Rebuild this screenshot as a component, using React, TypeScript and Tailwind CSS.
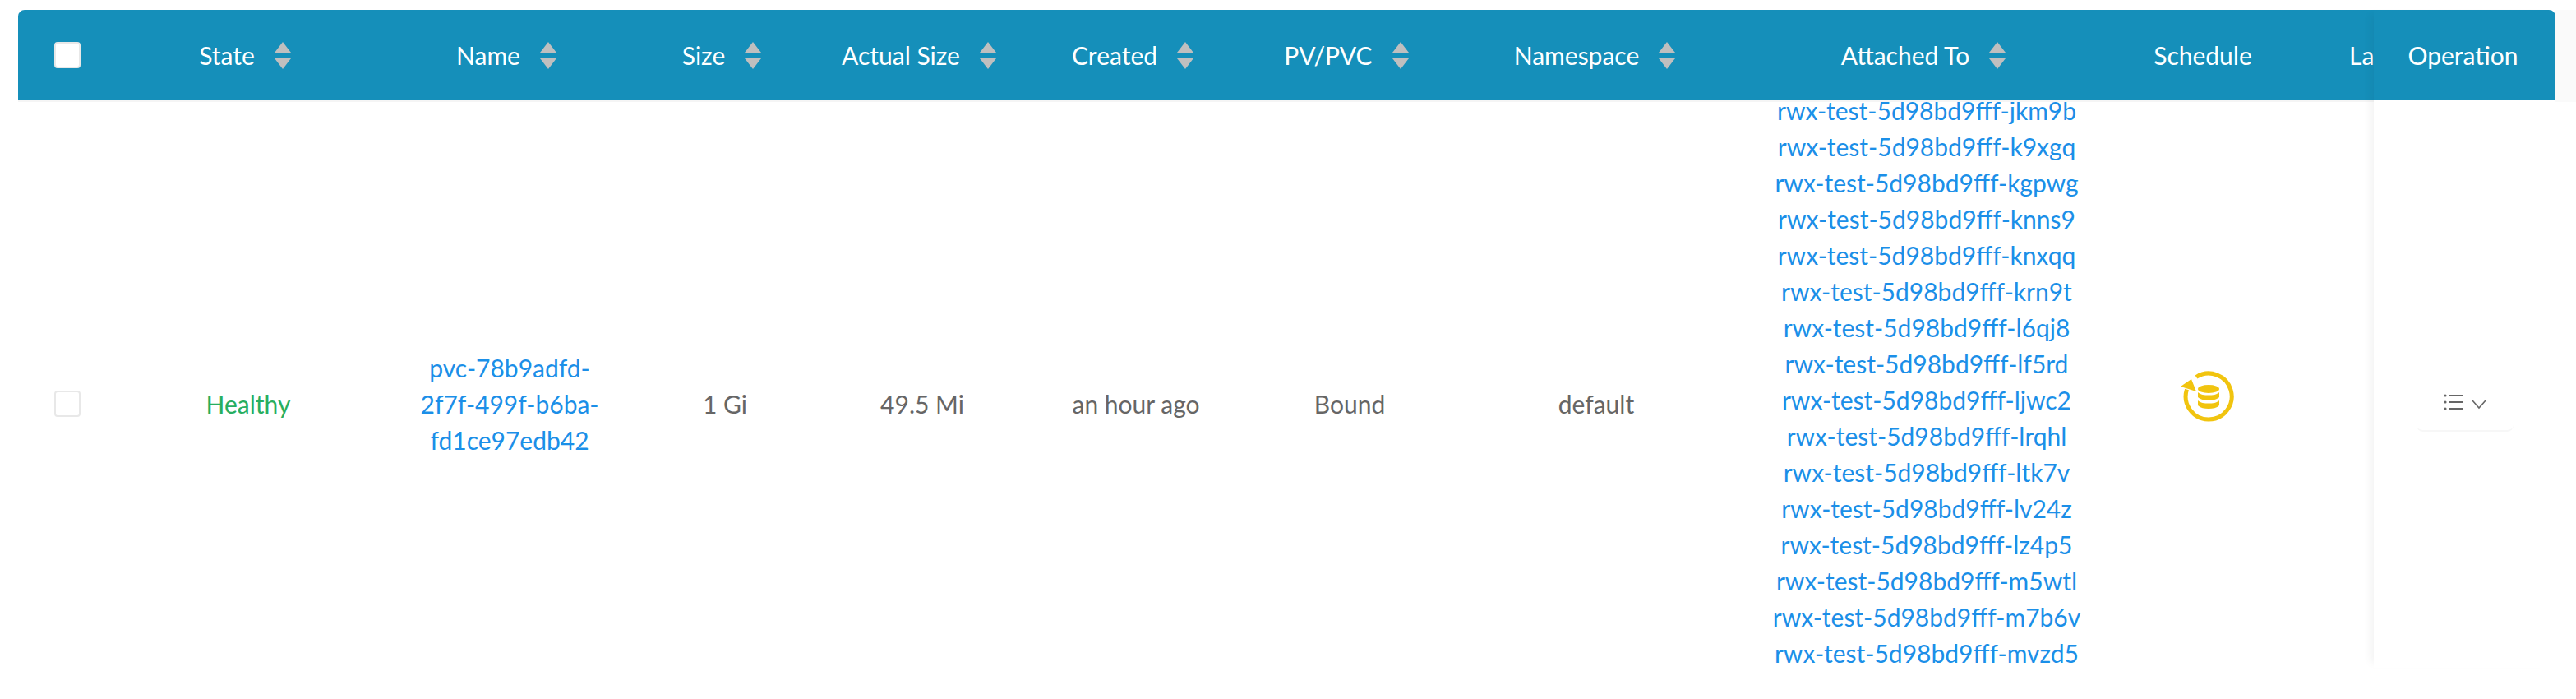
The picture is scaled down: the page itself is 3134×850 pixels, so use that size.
const font = "font-['Lato','Open_Sans',sans-serif]";

const gridCols =
  'grid grid-cols-[120px_320px_316px_208px_272px_248px_272px_332px_468px_208px_102px]';

const columns = ['State', 'Name', 'Size', 'Actual Size', 'Created', 'PV/PVC', 'Namespace', 'Attached To'];

const attached = [
  'jkm9b', 'k9xgq', 'kgpwg', 'knns9', 'knxqq', 'krn9t', 'l6qj8', 'lf5rd',
  'ljwc2', 'lrqhl', 'ltk7v', 'lv24z', 'lz4p5', 'm5wtl', 'm7b6v', 'mvzd5',
];

function SortIcon() {
  return (
    <svg width="20" height="33" viewBox="0 0 20 33" className="shrink-0">
      <polygon points="10,0 20,13 0,13" fill="#bfbfbf" />
      <polygon points="0,20 20,20 10,33" fill="#bfbfbf" />
    </svg>
  );
}

function ScheduleIcon() {
  return (
    <svg width="70" height="66" viewBox="0 0 70 66" fill="none">
      <path d="M21 8.5A28 28 0 1 1 9.5 23.5" stroke="#f1c40f" strokeWidth="5" />
      <polygon points="2,20 15,11 21,26" fill="#f1c40f" />
      <ellipse cx="36" cy="23" rx="13" ry="5" fill="#f1c40f" />
      <path d="M23 27c3 3 8 3.6 13 3.6S46 30 49 27v6c-3 3-8 3.6-13 3.6S26 36 23 33z" fill="#f1c40f" />
      <path d="M23 37c3 3 8 3.6 13 3.6S46 40 49 37v6c-3 3-8 4-13 4S26 46 23 43z" fill="#f1c40f" />
    </svg>
  );
}

function OperationIcon() {
  return (
    <svg width="52" height="20" viewBox="0 0 52 20" fill="none" stroke="#666666">
      <circle cx="2" cy="2" r="1.6" fill="#666666" stroke="none" />
      <circle cx="2" cy="10" r="1.6" fill="#666666" stroke="none" />
      <circle cx="2" cy="18" r="1.6" fill="#666666" stroke="none" />
      <path d="M7 2h17M7 10h17M7 18h17" strokeWidth="2" />
      <path d="M35 8l8 9 8-9" strokeWidth="1.6" />
    </svg>
  );
}

function Checkbox() {
  return <div className="w-8 h-8 rounded-[4px] border-2 bg-white border-[#e8e8e8]" />;
}

export default function App() {
  return (
    <div className={`w-[3134px] h-[850px] bg-white pt-3 pl-[22px] flex items-start text-[30px] leading-[44px] ${font}`}>
      <div className="w-[2866px] shrink-0 overflow-hidden">
        <div className={`${gridCols} h-[110px] items-center bg-[#158fba] text-white rounded-tl-lg`}>
          <div className="flex justify-center">
            <Checkbox />
          </div>
          {columns.map((name) => (
            <div key={name} className="flex items-center justify-center gap-6 pr-2">
              <span>{name}</span>
              <SortIcon />
            </div>
          ))}
          <div className="text-center pr-1">Schedule</div>
          <div className="pl-[72px]">La</div>
        </div>
        <div className="h-[688px] border-t-2 border-[#f5f5f5] overflow-hidden text-[#666666]">
          <div className={`${gridCols} h-[734px] items-center`}>
            <div className="flex justify-center">
              <Checkbox />
            </div>
            <div className="text-center text-[#27ae60]">Healthy</div>
            <div className="text-center text-[#1b8fe8] px-8">pvc-78b9adfd-2f7f-499f-b6ba-fd1ce97edb42</div>
            <div className="text-center">1 Gi</div>
            <div className="text-center">49.5 Mi</div>
            <div className="text-center">an hour ago</div>
            <div className="text-center">Bound</div>
            <div className="text-center pr-1">default</div>
            <div className="self-start -mt-3 text-center text-[#1b8fe8]">
              {attached.map((id) => (
                <div key={id}>rwx-test-5d98bd9fff-{id}</div>
              ))}
            </div>
            <div className="flex justify-center pl-2 mb-4">
              <ScheduleIcon />
            </div>
            <div />
          </div>
        </div>
      </div>
      <div className="w-[221px] shrink-0 relative z-10 shadow-[-10px_0_10px_-6px_rgba(0,0,0,0.05)]">
        <div className="h-[110px] flex items-center justify-center bg-[#158fba] text-white rounded-tr-lg pr-1">
          Operation
        </div>
        <div className="h-[690px] overflow-hidden bg-white">
          <div className="h-[736px] flex items-center justify-center">
            <div className="w-[118px] h-[70px] flex items-center justify-center rounded-lg border-b-2 border-[#f7f7f7]">
              <OperationIcon />
            </div>
          </div>
        </div>
      </div>
      <div className="flex-1 h-[112px] bg-[#fafafa]" />
    </div>
  );
}
